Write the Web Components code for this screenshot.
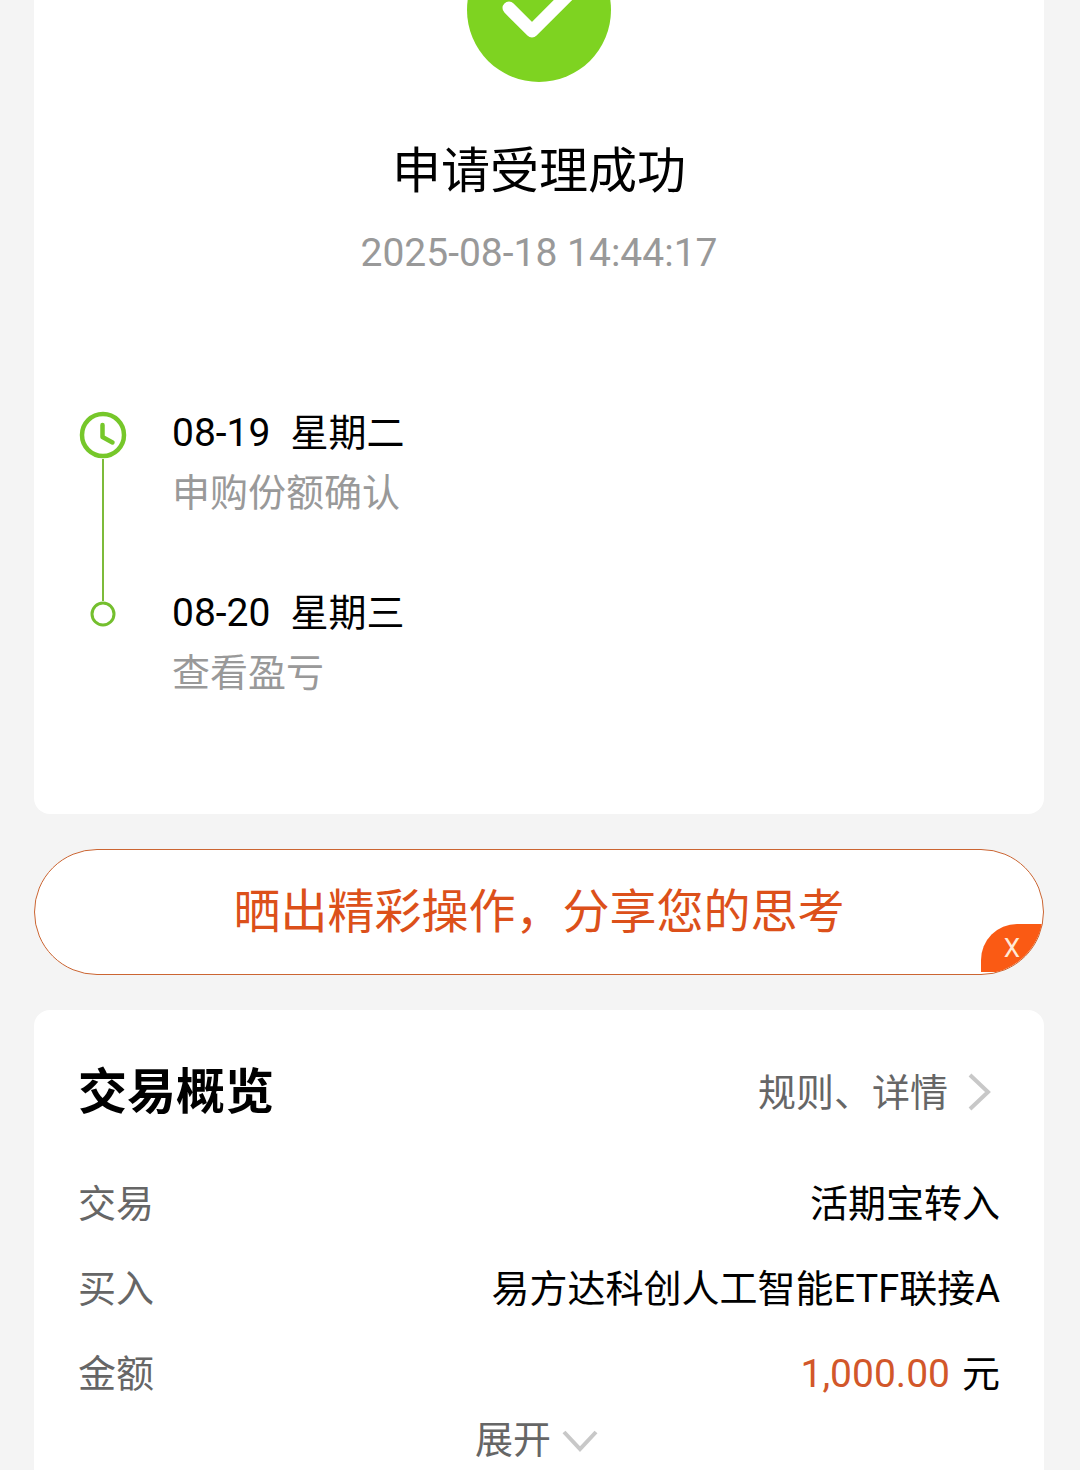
<!DOCTYPE html>
<html lang="zh-CN">
<head>
<meta charset="UTF-8">
<meta name="viewport" content="width=device-width, initial-scale=1.0">
<title>申请受理成功</title>
<style>
    body {
        margin: 0;
        background: #f4f4f4;
        color: #000;
        font-family: Roboto, "Noto Sans CJK SC", sans-serif;
        font-size: 38px;
        line-height: 60px;
    }
</style>
</head>
<body>
<order-page>
    <app-card>
        <result-header time="2025-08-18 14:44:17">申请受理成功</result-header>
        <time-line>
            <timeline-item marker="clock" date="08-19" weekday="星期二">申购份额确认</timeline-item>
            <timeline-item marker="dot" date="08-20" weekday="星期三">查看盈亏</timeline-item>
        </time-line>
    </app-card>
    <share-banner>晒出精彩操作，分享您的思考</share-banner>
    <app-card>
        <order-summary heading="交易概览" more="规则、详情">
            <summary-row label="交易">活期宝转入</summary-row>
            <summary-row label="买入">易方达科创人工智能ETF联接A</summary-row>
            <summary-row label="金额" amount="1,000.00">元</summary-row>
        </order-summary>
    </app-card>
</order-page>

<script>
class OrderPage extends HTMLElement {
    constructor() {
        super();
        this.attachShadow({ mode: 'open' });
    }

    connectedCallback() {
        this.shadowRoot.innerHTML = `
            <style>
                :host {
                    display: block;
                }

                main {
                    display: flex;
                    flex-direction: column;
                    gap: 35px;
                    padding: 0 36px 0 34px;
                }

                ::slotted(app-card:first-child) {
                    --card-radius: 0 0 16px 16px;
                    --card-padding: 0 44px 111px;
                }

                ::slotted(app-card:last-child) {
                    --card-radius: 16px 16px 0 0;
                    --card-padding: 53px 44px 0;
                }
            </style>
            <main><slot></slot></main>
        `;
    }
}

class AppCard extends HTMLElement {
    constructor() {
        super();
        this.attachShadow({ mode: 'open' });
    }

    connectedCallback() {
        this.shadowRoot.innerHTML = `
            <style>
                :host {
                    display: block;
                    background: #fff;
                    border-radius: var(--card-radius, 16px);
                    padding: var(--card-padding, 44px);
                }
            </style>
            <slot></slot>
        `;
    }
}

class ResultHeader extends HTMLElement {
    constructor() {
        super();
        this.attachShadow({ mode: 'open' });
    }

    connectedCallback() {
        this.render();
    }

    render() {
        const time = this.getAttribute('time') || '';

        this.shadowRoot.innerHTML = `
            <style>
                :host {
                    display: flex;
                    flex-direction: column;
                    align-items: center;
                }

                svg {
                    display: block;
                }

                h1 {
                    margin: 60px 0 21px;
                    font-size: 49px;
                    font-weight: 400;
                }

                time {
                    color: #999;
                    font-size: 39px;
                }
            </style>
            <svg width="144" height="82" viewBox="0 62 144 82" aria-hidden="true">
                <circle cx="72" cy="72" r="72" fill="#7ed321"/>
                <path d="M42 70l23 23 38-38" fill="none" stroke="#fff" stroke-width="13"
                    stroke-linecap="round" stroke-linejoin="round"/>
            </svg>
            <h1><slot></slot></h1>
            <time>${time}</time>
        `;
    }
}

class TimeLine extends HTMLElement {
    constructor() {
        super();
        this.attachShadow({ mode: 'open' });
    }

    connectedCallback() {
        this.shadowRoot.innerHTML = `
            <style>
                :host {
                    display: block;
                    margin-top: 120px;
                }

                ::slotted(timeline-item:not(:last-child)) {
                    --item-space: 60px;
                    --line-after: #7dbb3a;
                }

                ::slotted(timeline-item:not(:first-child)) {
                    --line-before: #7dbb3a;
                }
            </style>
            <slot></slot>
        `;
    }
}

const MARKERS = {
    clock: `
        <svg width="48" height="48" viewBox="0 0 48 48" aria-hidden="true">
            <circle cx="24" cy="24" r="21" fill="none" stroke="#76c72a" stroke-width="4.5"/>
            <path d="M23.500 14v12l10 5.500" fill="none" stroke="#76c72a" stroke-width="4.500"
                stroke-linecap="round" stroke-linejoin="round"/>
        </svg>`,
    dot: `
        <svg width="26" height="26" viewBox="0 0 26 26" aria-hidden="true">
            <circle cx="13" cy="13" r="11" fill="none" stroke="#74bf2e" stroke-width="3"/>
        </svg>`
};

class TimelineItem extends HTMLElement {
    constructor() {
        super();
        this.attachShadow({ mode: 'open' });
    }

    connectedCallback() {
        this.render();
    }

    render() {
        const marker = this.getAttribute('marker') || 'dot';
        const date = this.getAttribute('date') || '';
        const weekday = this.getAttribute('weekday') || '';

        this.shadowRoot.innerHTML = `
            <style>
                :host {
                    display: flex;
                    gap: 44px;
                }

                .rail {
                    display: flex;
                    flex-direction: column;
                    align-items: center;
                    width: 50px;
                }

                .rail svg {
                    display: block;
                }

                .before {
                    width: 2px;
                    height: ${marker === 'clock' ? '8px' : '18px'};
                    background: var(--line-before, transparent);
                }

                .after {
                    flex: 1;
                    width: 2px;
                    background: var(--line-after, transparent);
                }

                .content {
                    padding-bottom: var(--item-space, 0);
                }

                .day {
                    display: flex;
                    align-items: baseline;
                    gap: 20px;
                }

                time {
                    font-size: 39px;
                }

                .note {
                    color: #999;
                }
            </style>
            <div class="rail">
                <span class="before"></span>
                ${MARKERS[marker]}
                <span class="after"></span>
            </div>
            <div class="content">
                <div class="day"><time>${date}</time><span>${weekday}</span></div>
                <div class="note"><slot></slot></div>
            </div>
        `;
    }
}

class ShareBanner extends HTMLElement {
    constructor() {
        super();
        this.attachShadow({ mode: 'open' });
    }

    connectedCallback() {
        this.shadowRoot.innerHTML = `
            <style>
                :host {
                    display: block;
                    position: relative;
                    overflow: hidden;
                    border: 1px solid #cb6532;
                    border-radius: 63px;
                    background: #fff;
                }

                a {
                    display: block;
                    padding: 32px 40px;
                    color: #dc501a;
                    font-size: 47px;
                    text-align: center;
                    text-decoration: none;
                }

                button {
                    position: absolute;
                    right: 0;
                    bottom: 2px;
                    width: 62px;
                    height: 48px;
                    padding: 0;
                    border: 0;
                    border-radius: 36px 0 0 0;
                    background: #fa5a14;
                    color: #ffe9d6;
                    font: inherit;
                    font-size: 26px;
                    line-height: 48px;
                    cursor: pointer;
                }
            </style>
            <a href="#share"><slot></slot></a>
            <button type="button">X</button>
        `;
        this.shadowRoot.querySelector('button').addEventListener('click', () => this.remove());
    }
}

class OrderSummary extends HTMLElement {
    constructor() {
        super();
        this.attachShadow({ mode: 'open' });
    }

    connectedCallback() {
        this.render();
    }

    render() {
        const heading = this.getAttribute('heading') || '';
        const more = this.getAttribute('more') || '';

        this.shadowRoot.innerHTML = `
            <style>
                :host {
                    display: block;
                }

                header {
                    display: flex;
                    justify-content: space-between;
                    align-items: center;
                    margin-bottom: 51px;
                }

                h2 {
                    margin: 0;
                    font-size: 49px;
                    font-weight: 700;
                }

                a {
                    display: flex;
                    align-items: center;
                    gap: 16px;
                    padding-right: 4px;
                    color: #666;
                    text-decoration: none;
                }

                .rows {
                    display: flex;
                    flex-direction: column;
                    gap: 25px;
                }

                button {
                    display: flex;
                    align-items: center;
                    gap: 8px;
                    margin: 6px auto 0;
                    padding: 0;
                    border: 0;
                    background: none;
                    color: #666;
                    font: inherit;
                    cursor: pointer;
                }

                svg {
                    display: block;
                    fill: none;
                    stroke: #c8c8c8;
                    stroke-width: 4;
                }
            </style>
            <header>
                <h2>${heading}</h2>
                <a href="#rules">${more}
                    <svg width="32" height="40" viewBox="0 0 32 40" aria-hidden="true">
                        <path d="M6 2l18 17L6 36"/>
                    </svg>
                </a>
            </header>
            <div class="rows"><slot></slot></div>
            <button type="button">展开
                <svg width="44" height="32" viewBox="0 0 44 32" aria-hidden="true">
                    <path d="M5 8l16 17L37 8"/>
                </svg>
            </button>
        `;
    }
}

class SummaryRow extends HTMLElement {
    constructor() {
        super();
        this.attachShadow({ mode: 'open' });
    }

    connectedCallback() {
        this.render();
    }

    render() {
        const label = this.getAttribute('label') || '';
        const amount = this.getAttribute('amount');

        this.shadowRoot.innerHTML = `
            <style>
                :host {
                    display: block;
                }

                dl {
                    display: flex;
                    justify-content: space-between;
                    margin: 0;
                }

                dt {
                    color: #666;
                }

                dd {
                    display: flex;
                    align-items: baseline;
                    gap: 12px;
                    margin: 0;
                }

                .amount {
                    color: #d2572a;
                    font-size: 39px;
                }
            </style>
            <dl>
                <dt>${label}</dt>
                <dd>${amount ? `<span class="amount">${amount}</span>` : ''}<span><slot></slot></span></dd>
            </dl>
        `;
    }
}

customElements.define('order-page', OrderPage);
customElements.define('app-card', AppCard);
customElements.define('result-header', ResultHeader);
customElements.define('time-line', TimeLine);
customElements.define('timeline-item', TimelineItem);
customElements.define('share-banner', ShareBanner);
customElements.define('order-summary', OrderSummary);
customElements.define('summary-row', SummaryRow);
</script>
</body>
</html>
